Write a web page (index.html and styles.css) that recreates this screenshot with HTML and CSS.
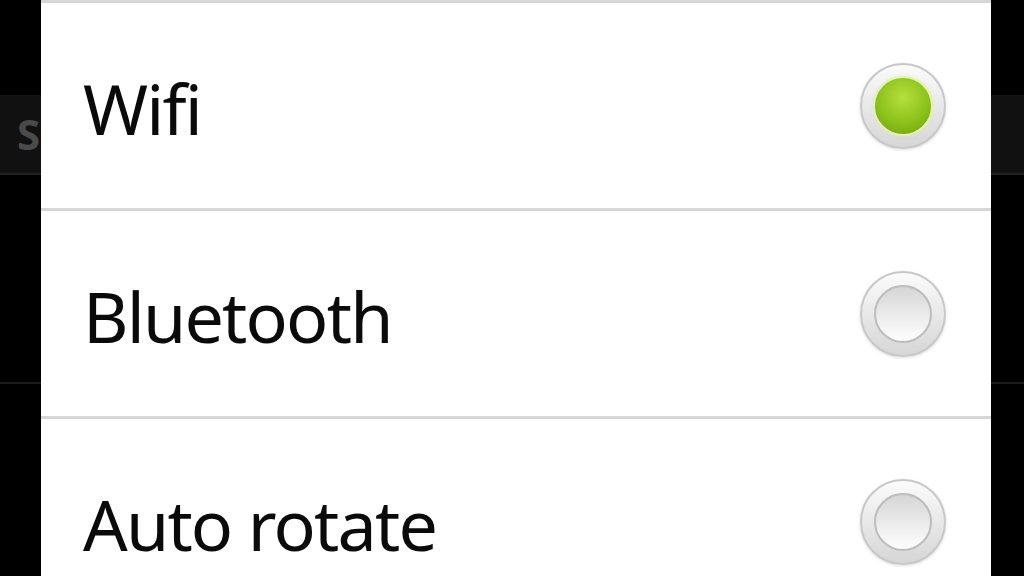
FILE: index.html
```html
<!DOCTYPE html>
<html lang="en">

<head>
    <meta charset="UTF-8">
    <meta name="viewport" content="width=device-width, initial-scale=1.0">
    <title>Settings</title>
    <link rel="stylesheet" href="styles.css">
</head>

<body>
    <!-- 后面的设置页面，被弹窗挡住，只露出一个S -->
    <div class="screen">
        <div class="header">S</div>
        <div class="sep"></div>
    </div>
    <!-- 弹窗列表 -->
    <div class="dialog">
        <div class="row">
            <span class="label">Wifi</span>
            <span class="radio on"><i></i></span>
        </div>
        <div class="row">
            <span class="label">Bluetooth</span>
            <span class="radio"><i></i></span>
        </div>
        <div class="row">
            <span class="label">Auto rotate</span>
            <span class="radio"><i></i></span>
        </div>
    </div>
</body>

</html>
```

FILE: styles.css
```css
* {
    margin: 0;
    padding: 0;
    box-sizing: border-box;
}

body {
    width: 1024px;
    height: 576px;
    background-color: #000;
    overflow: hidden;
    position: relative;
    font-family: "Noto Sans", "Open Sans", sans-serif;
}
/* 背景的标题栏 */

.screen {
    padding-top: 95px;
}

.header {
    height: 80px;
    background-color: #111;
    border-bottom: 2px solid #222;
    padding-left: 17px;
    color: #4a4a4a;
    font-size: 42px;
    font-weight: bold;
    line-height: 78px;
}

.sep {
    margin-top: 207px;
    height: 2px;
    background-color: #1c1c1c;
}
/* 白色弹窗 */

.dialog {
    position: absolute;
    left: 41px;
    top: 0;
    width: 950px;
    height: 576px;
    background-color: #fff;
    overflow: hidden;
}

.row {
    height: 208px;
    border-top: 3px solid #d6d6d6;
    display: flex;
    align-items: center;
    justify-content: space-between;
    padding: 0 45px 0 42px;
}

.label {
    font-size: 70px;
    letter-spacing: -1.8px;
    line-height: 1;
    color: #0a0a0a;
    padding-top: 4px;
}
/* 单选按钮：外圈 + 内圈 */

.radio {
    flex-shrink: 0;
    width: 86px;
    height: 86px;
    border-radius: 50%;
    border: 2px solid #c8c8c8;
    background: linear-gradient(#fbfbfb, #d6d6d6);
    box-shadow: 0 1px 3px rgba(0, 0, 0, .15);
    display: flex;
    align-items: center;
    justify-content: center;
}

.radio i {
    width: 58px;
    height: 58px;
    border-radius: 50%;
    border: 2px solid #bdbdbd;
    background: linear-gradient(#d6d6d6, #f2f2f2 70%, #fdfdfd);
}

.radio.on i {
    width: 60px;
    height: 60px;
    border: 2px solid #e2f2b8;
    background: radial-gradient(circle at 50% 35%, #b6df3e, #8cc21a 55%, #6c9e0a);
    box-shadow: 0 0 3px #d9efa0;
}
```
